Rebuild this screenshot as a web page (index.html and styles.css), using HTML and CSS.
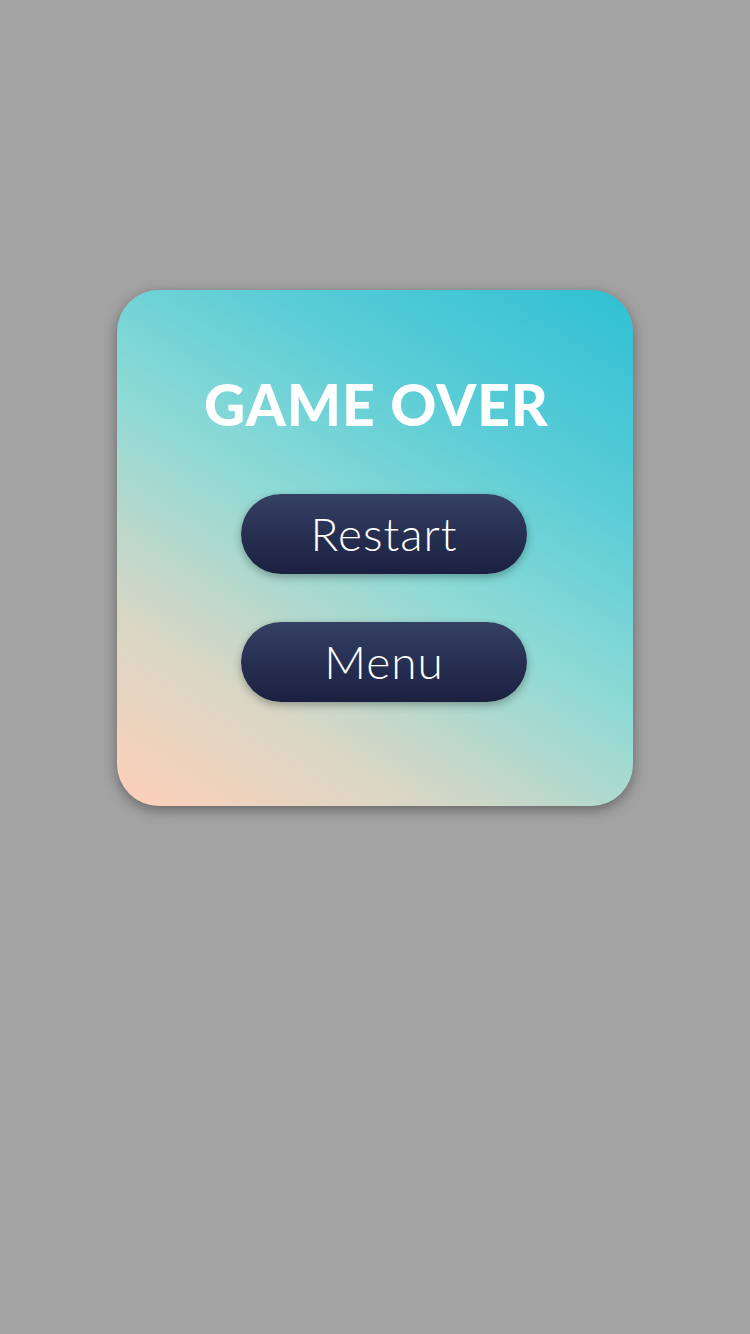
FILE: index.html
```html
<!DOCTYPE html>
<html>
<head>
<meta charset="utf-8">
<link rel="stylesheet" href="styles.css">
</head>
<body>
<main class="screen">
  <section class="card">
    <h1 class="title">GAME OVER</h1>
    <div class="actions">
      <button class="btn">Restart</button>
      <button class="btn">Menu</button>
    </div>
  </section>
</main>
</body>
</html>
```
FILE: styles.css
```css
html, body {
  margin: 0;
  padding: 0;
  background: #a3a3a3;
}
.screen {
  width: 750px;
  height: 1334px;
  display: flex;
  flex-direction: column;
  align-items: center;
  padding-top: 290px;
  box-sizing: border-box;
}
.card {
  width: 516px;
  height: 516px;
  box-sizing: border-box;
  border-radius: 42px;
  background: linear-gradient(32deg, #ffcfb8 0%, #d6d7c5 24%, #8cdad6 50%, #5ccdd7 72%, #2ec0d4 100%);
  box-shadow: 0 4px 14px rgba(0, 0, 0, 0.38);
  display: flex;
  flex-direction: column;
  align-items: center;
  padding-top: 86px;
}
.title {
  margin: 0;
  font-family: Lato, "Liberation Sans", sans-serif;
  font-weight: 900;
  font-size: 57px;
  line-height: 57px;
  color: #fff;
  letter-spacing: 1px;
  padding-left: 3px;
}
.actions {
  margin-top: 61px;
  display: flex;
  flex-direction: column;
  gap: 48px;
  padding-left: 18px;
}
.btn {
  width: 286px;
  height: 80px;
  border: none;
  border-radius: 40px;
  background: linear-gradient(180deg, #344064 0%, #1b2040 100%);
  box-shadow: 0 3px 8px rgba(0, 0, 0, 0.3);
  color: #fff;
  font-family: Lato, "Liberation Sans", sans-serif;
  font-weight: 300;
  font-size: 46px;
  letter-spacing: 1px;
  padding: 0 0 2px 0;
}
```
